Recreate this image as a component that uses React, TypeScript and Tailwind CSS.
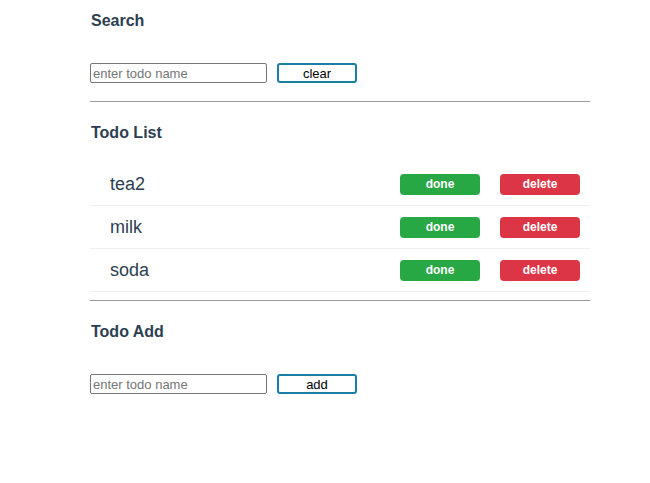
import React from "react";

const font = { fontFamily: '"Liberation Sans", Arial, sans-serif' };

function InputRow({ label }: { label: string }) {
  return (
    <div className="flex items-center h-[20px]">
      <input
        placeholder="enter todo name"
        className="w-[177px] h-[20px] border border-[#767676] rounded-[2px] px-[2px] text-[13px] text-black placeholder:text-[#757575] outline-none"
      />
      <button className="ml-[10px] w-[80px] h-[20px] border-2 border-[#1a7fa5] rounded-[3px] bg-white text-[13px] text-black leading-none flex items-center justify-center">
        {label}
      </button>
    </div>
  );
}

function Row({ name }: { name: string }) {
  return (
    <div className="flex items-center h-[43px] border-b border-[#eeeeee] pl-[20px] pr-[10px]">
      <span className="flex-1 text-[18px] text-[#2c3e50]">{name}</span>
      <button className="w-[80px] h-[21px] rounded-[4px] bg-[#28a745] text-white text-[12px] font-bold flex items-center justify-center">
        done
      </button>
      <button className="ml-[20px] w-[80px] h-[21px] rounded-[4px] bg-[#dc3545] text-white text-[12px] font-bold flex items-center justify-center">
        delete
      </button>
    </div>
  );
}

export default function App() {
  return (
    <div className="w-[650px] h-[483px] bg-white" style={font}>
      <div className="ml-[90px] w-[500px] pt-[12px]">
        <h3 className="pl-[1px] text-[16px] leading-[18px] font-bold text-[#2c3e50]">Search</h3>
        <div className="mt-[33px]">
          <InputRow label="clear" />
        </div>
        <div className="mt-[18px] border-t border-[#9a9a9a]" />
        <h3 className="pl-[1px] mt-[22px] text-[16px] leading-[18px] font-bold text-[#2c3e50]">Todo List</h3>
        <div className="mt-[21px]">
          <Row name="tea2" />
          <Row name="milk" />
          <Row name="soda" />
        </div>
        <div className="mt-[8px] border-t border-[#9a9a9a]" />
        <h3 className="pl-[1px] mt-[22px] text-[16px] leading-[18px] font-bold text-[#2c3e50]">Todo Add</h3>
        <div className="mt-[33px]">
          <InputRow label="add" />
        </div>
      </div>
    </div>
  );
}
